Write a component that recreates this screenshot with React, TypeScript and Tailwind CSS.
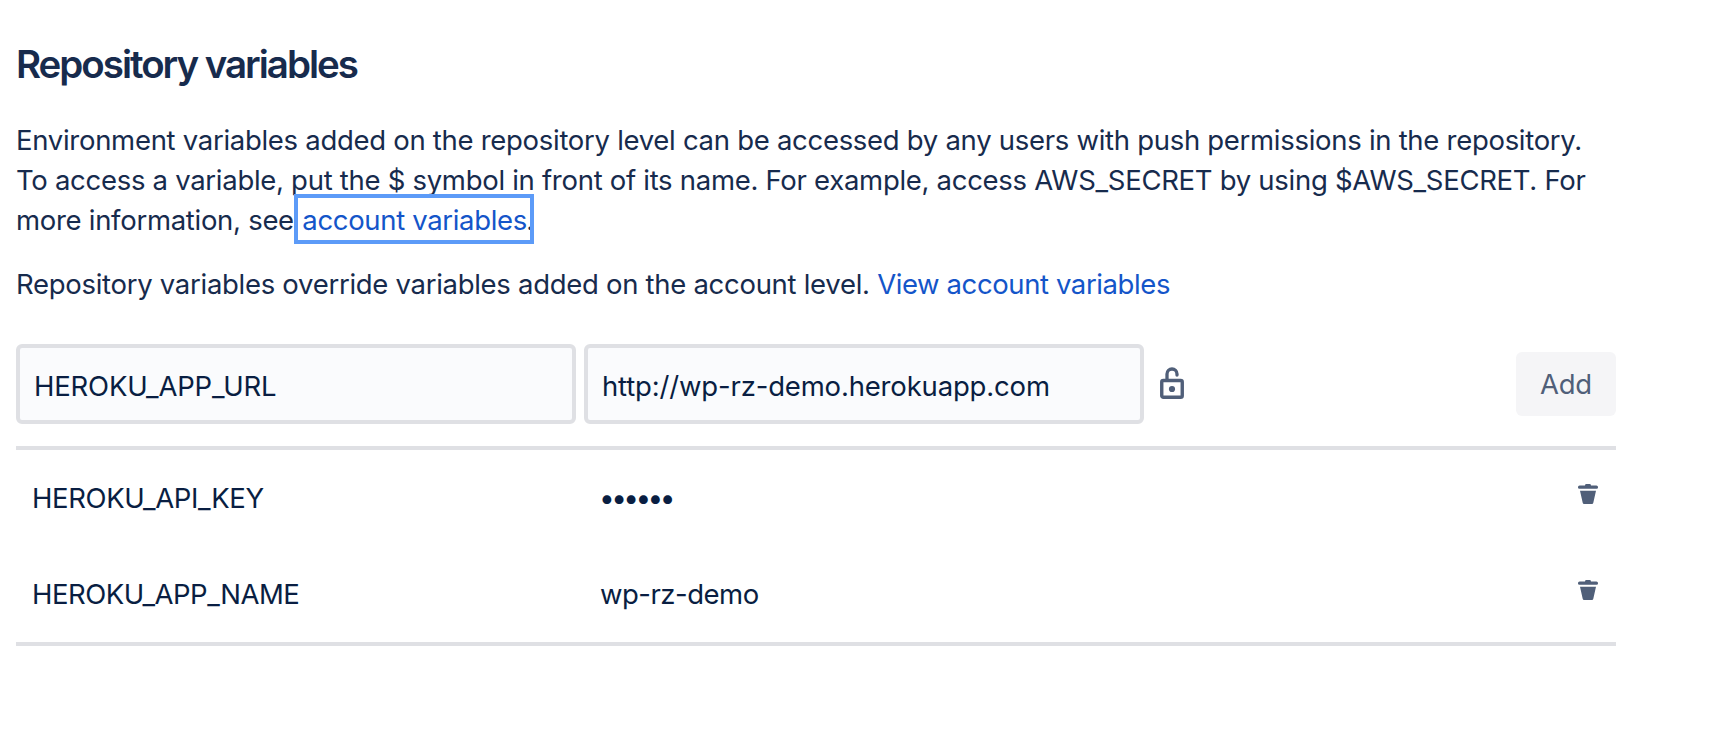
import React from "react";

function UnlockIcon() {
  return (
    <svg width="24" height="32" viewBox="0 0 24 32" fill="none" className="block">
      <path d="M7 13V7a5 5 0 0 1 10 0v1.1" stroke="currentColor" strokeWidth="3.3" strokeLinecap="round" />
      <rect x="1.75" y="13.5" width="20.5" height="16.8" rx="1.6" stroke="currentColor" strokeWidth="3.4" />
      <circle cx="12" cy="22" r="3.1" fill="currentColor" />
    </svg>
  );
}

function TrashIcon() {
  return (
    <svg width="20" height="20" viewBox="0 0 20 20" fill="currentColor" className="block">
      <path d="M7 1.4Q7 0 8.4 0h3.2Q13 0 13 1.4h5.4a1.6 1.6 0 0 1 1.6 1.6v.4A1.4 1.4 0 0 1 18.6 4.8H1.4A1.4 1.4 0 0 1 0 3.4V3a1.6 1.6 0 0 1 1.6-1.6z" />
      <path d="M2 6.8h16l-2.7 12a1.5 1.5 0 0 1-1.5 1.2H6.2a1.5 1.5 0 0 1-1.5-1.2z" />
    </svg>
  );
}

function VariableRow({ name, nameClass, children }: { name: string; nameClass: string; children: React.ReactNode }) {
  return (
    <li className="flex h-24 items-center pr-[18px] pl-4">
      <span className={`w-[568px] ${nameClass}`}>{name}</span>
      <span className="flex-1">{children}</span>
      <button type="button" aria-label="Delete" className="mb-2 text-[#505f79]">
        <TrashIcon />
      </button>
    </li>
  );
}

export default function App() {
  return (
    <main className="h-[742px] w-full overflow-hidden bg-white px-4 pt-10 font-['Inter','Liberation_Sans',sans-serif] text-[27.5px] leading-10 tracking-[-0.29px] text-[#172b4d]">
      <section className="w-[1600px]">
        <h2 className="text-[38.5px] leading-12 font-semibold tracking-[-2.02px] whitespace-nowrap">Repository variables</h2>

        <p className="mt-8 whitespace-nowrap">
          Environment variables added on the repository level can be accessed by any users with push permissions in the repository.
          <br />
          To access a variable, put the $ symbol in front of its name. For example, access AWS_SECRET by using $AWS_SECRET. For
          <br />
          more information, see{" "}
          <a className="relative ml-px tracking-[-0.34px] text-[#1455c9]">
            account variables
            <span className="absolute top-[-9px] left-[-8.5px] z-10 h-[50px] w-[240px] border-4 border-[#5c9bf8]" />
          </a>
          <span className="-ml-[0.5px]">.</span>
        </p>

        <p className="mt-6 whitespace-nowrap">
          Repository variables override variables added on the account level.{" "}
          <a className="tracking-[-0.4px] text-[#1455c9]">View account variables</a>
        </p>

        <div className="mt-10 flex items-center border-b-4 border-[#dfe0e4] pb-[22px] text-[#091e42]">
          <div className="flex h-20 w-[560px] items-center rounded-md border-4 border-[#dfe0e4] bg-[#fafbfd] px-[14px] pt-1 tracking-[-0.2px]">
            HEROKU_APP_URL
          </div>
          <div className="ml-2 flex h-20 w-[560px] items-center rounded-md border-4 border-[#dfe0e4] bg-[#fafbfd] px-[14px] pt-1 tracking-[-0.17px]">
            http://wp-rz-demo.herokuapp.com
          </div>
          <span className="mb-0.5 ml-4 text-[#505f79]">
            <UnlockIcon />
          </span>
          <button type="button" className="ml-auto h-16 w-[100px] rounded-md bg-[#f5f5f7] text-[#505f79]">
            Add
          </button>
        </div>

        <ul className="border-b-4 border-[#dfe0e4] text-[#091e42]">
          <VariableRow name="HEROKU_API_KEY" nameClass="tracking-[-0.36px]">
            <span className="-ml-px text-[28px] tracking-[-3.6px]">••••••</span>
          </VariableRow>
          <VariableRow name="HEROKU_APP_NAME" nameClass="tracking-[-0.47px]">
            <span className="tracking-[-0.5px]">wp-rz-demo</span>
          </VariableRow>
        </ul>
      </section>
    </main>
  );
}
